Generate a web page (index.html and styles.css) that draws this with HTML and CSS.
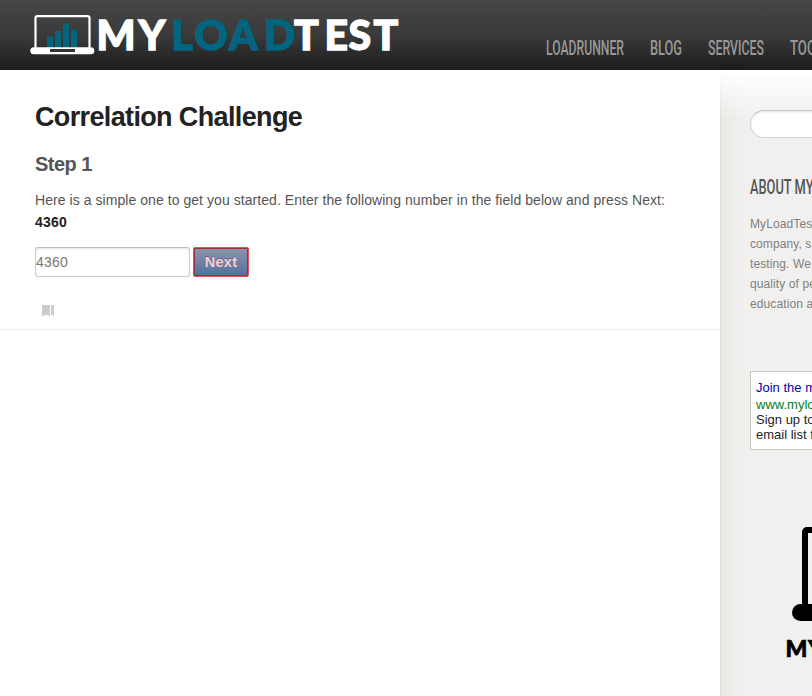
FILE: index.html
```html
<!DOCTYPE html>
<html lang="en">
<head>
<meta charset="utf-8">
<title>Correlation Challenge</title>
<link rel="stylesheet" href="styles.css">
</head>
<body>
<header class="header">
  <svg class="logo" width="372" height="44" viewBox="30 12 372 44">
    <rect x="35.5" y="16.2" width="54" height="33" rx="2" fill="none" stroke="#fff" stroke-width="2.2"/>
    <g fill="#026580"><rect x="47" y="36.5" width="6" height="12"/><rect x="55" y="31" width="6" height="17"/><rect x="63" y="23.5" width="6" height="24"/><rect x="71" y="30" width="6" height="17"/></g>
    <rect x="30.3" y="47.3" width="64" height="7" rx="3.5" fill="#fff"/>
    <rect x="50" y="49" width="25" height="3" fill="#333"/>
    <text class="logo-text" y="49.800"><tspan x="96.500 138.500">MY</tspan><tspan class="logo-load" x="171.500 194.5 229 264">LOAD</tspan><tspan x="294 324.500 348.5 373.500">TEST</tspan></text>
  </svg>
  <nav class="nav">
    <a><svg width="78" height="22"><text y="18" textLength="78" lengthAdjust="spacingAndGlyphs">LOADRUNNER</text></svg></a>
    <a><svg width="32" height="22"><text y="18" textLength="32" lengthAdjust="spacingAndGlyphs">BLOG</text></svg></a>
    <a><svg width="56" height="22"><text y="18" textLength="56" lengthAdjust="spacingAndGlyphs">SERVICES</text></svg></a>
    <a><svg width="41" height="22"><text y="18" textLength="41" lengthAdjust="spacingAndGlyphs">TOOLS</text></svg></a>
  </nav>
</header>
<div class="page">
  <main class="main">
    <article class="post">
      <h1>Correlation Challenge</h1>
      <h2>Step 1</h2>
      <p>Here is a simple one to get you started. Enter the following number in the field below and press Next: <strong>4360</strong></p>
      <form class="form">
        <input class="field" type="text" value="4360">
        <button class="next" type="button">Next</button>
      </form>
      <svg class="bookmark" width="12" height="12"><path d="M0 0h8v12l-1-1.500h-1l-2-1-2 1h-1l-1 1.500zM9 0h3v12l-1-1.500-2-.8z" fill="#ccc"/></svg>
    </article>
  </main>
  <aside class="sidebar">
    <div class="search"></div>
    <h3><svg width="150" height="22"><text y="18" textLength="126" lengthAdjust="spacingAndGlyphs">ABOUT MYLOADTEST</text></svg></h3>
    <p class="about">MyLoadTest<br>company, s<br>testing. We<br>quality of pe<br>education a</p>
    <div class="ad"><span class="ad-title">Join the m</span><span class="ad-url">www.mylo</span><span>Sign up to</span><span>email list f</span></div>
    <svg class="badge" width="240" height="140" viewBox="750 525 240 140">
      <rect x="805" y="530" width="131" height="88" rx="2" fill="none" stroke="#000" stroke-width="6"/>
      <rect x="792" y="604" width="156" height="17" rx="8.500"/>
      <text class="badge-text" y="656.800" x="785.500 808">MY</text>
    </svg>
  </aside>
</div>
</body>
</html>
```
FILE: styles.css
```css
* { box-sizing: border-box; }
body { margin: 0; height: 696px; overflow: hidden; background: #fff; color: #555; font: 14px/22px "Liberation Sans", Arial, sans-serif; }
.header { display: flex; height: 70px; padding: 12px 0 0 30px; overflow: hidden; background: linear-gradient(#464646, #3a3a3a 50%, #1c1c1c); }
.logo { flex: none; }
.logo-text { font: 900 41px Lato, sans-serif; fill: #fff; stroke: #fff; stroke-width: 1.3px; }
.logo-load { fill: #026580; stroke: #026580; }
.nav { display: flex; flex: none; gap: 26px; margin: 25px 0 0 144px; }
.nav a { display: block; height: 22px; }
.nav svg, h3 svg { display: block; }
.nav text { font: 500 20px Roboto, sans-serif; fill: #999; }
.page { display: flex; height: 626px; overflow: hidden; }
.main { flex: none; width: 720px; }
.post { height: 260px; padding: 30px 35px 0; border-bottom: 1px solid #eee; }
h1 { margin: 0; color: #222; font-size: 27px; line-height: 34px; letter-spacing: -0.64px; }
h2 { margin: 17px 0 0; font-size: 20px; line-height: 26px; letter-spacing: -0.55px; }
.post p { margin: 12px 0 0; letter-spacing: .057px; }
strong { display: block; color: #222; letter-spacing: .2px; }
.form { display: flex; gap: 3px; margin-top: 14px; }
.field { width: 155px; height: 30px; margin: 0; padding: 0; border: 1px solid #ccc; border-top-color: #bbb; border-radius: 3px; box-shadow: inset 0 1px 2px #e5e5e5; color: #777; font: 14px "Liberation Sans", Arial, sans-serif; letter-spacing: .2px; }
.next { width: 56px; height: 30px; padding: 0; border: 1px solid #f04b50; border-radius: 2px; background: linear-gradient(#9094ad, #50719d); box-shadow: inset 0 0 0 1px #9b303f; color: #f6cfd5; font: bold 14.5px "Liberation Sans", sans-serif; letter-spacing: .3px; text-shadow: 0 -1px 0 #65658a; }
.bookmark { display: block; margin: 28px 0 0 7px; }
.sidebar { flex: none; width: 300px; padding: 40px 30px 0 29px; border-left: 1px solid #deded9; background: linear-gradient(#fff, rgba(255,255,255,0) 50px), linear-gradient(90deg, #e8e8e6, #f1f0ee 24px); border-image: linear-gradient(#fff, #deded9 50px) 1; }
.search { height: 28px; border: 1px solid #d5d5d5; border-top-color: #c5c5c5; border-radius: 14px; background: #fff; box-shadow: inset 0 1px 2px #e5e5e5; }
h3 { margin: 38px 0 0; height: 22px; }
h3 text { font: 500 20px Roboto, sans-serif; fill: #555; }
.about { margin: 16px 0 0; color: #808080; font-size: 12px; line-height: 20px; white-space: nowrap; letter-spacing: .1px; }
.ad { display: flex; flex-direction: column; height: 79px; margin-top: 57px; padding: 8px 5px; border: 1px solid #c8c8c0; background: #fff; color: #222; font-size: 13px; line-height: 15px; white-space: nowrap; }
.ad-title { color: #0000b5; margin-bottom: 2px; }
.ad-url { color: #008020; }
.badge { display: block; margin-top: 75px; }
.badge-text { font: 900 23px Lato, sans-serif; stroke: #000; stroke-width: .7px; }
```
